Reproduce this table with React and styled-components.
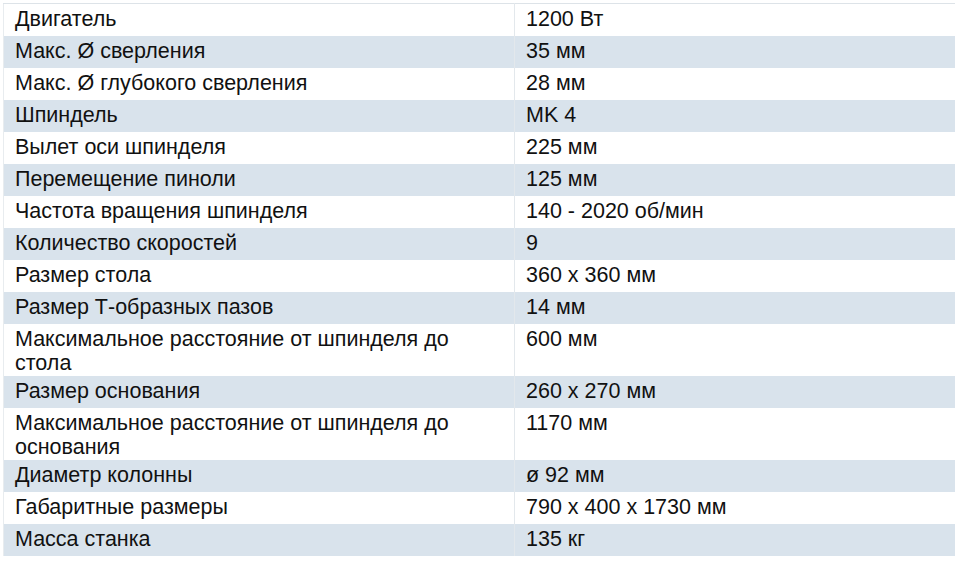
import React from 'react';
import styled, { createGlobalStyle } from 'styled-components';

const specs = [
    ['Двигатель', '1200 Вт'],
    ['Макс. Ø сверления', '35 мм'],
    ['Макс. Ø глубокого сверления', '28 мм'],
    ['Шпиндель', 'MK 4'],
    ['Вылет оси шпинделя', '225 мм'],
    ['Перемещение пиноли', '125 мм'],
    ['Частота вращения шпинделя', '140 - 2020 об/мин'],
    ['Количество скоростей', '9'],
    ['Размер стола', '360 x 360 мм'],
    ['Размер Т-образных пазов', '14 мм'],
    ['Максимальное расстояние от шпинделя до стола', '600 мм'],
    ['Размер основания', '260 x 270 мм'],
    ['Максимальное расстояние от шпинделя до основания', '1170 мм'],
    ['Диаметр колонны', 'ø 92 мм'],
    ['Габаритные размеры', '790 x 400 x 1730 мм'],
    ['Масса станка', '135 кг'],
];

const GlobalStyle = createGlobalStyle`
    body {
        margin: 0;
        background: #fff;
        font-family: "Liberation Sans", Arial, sans-serif;
    }
`;

const Page = styled.div`
    padding: 3px 4px 0 3px;
`;

const Table = styled.table`
    width: 952px;
    border-collapse: collapse;
    border-top: 1px solid #dde3e8;
    border-left: 1px solid #e8ecef;
    font-size: 21.5px;
    line-height: 24px;
    color: #111;
`;

const Row = styled.tr`
    background: ${props => (props.$shaded ? '#d9e3ec' : '#fff')};
`;

const Cell = styled.td`
    vertical-align: top;
    height: 28px;
    padding: 3px 11px 1px 11px;
    width: ${props => props.$width || 'auto'};
    border-right: ${props => (props.$divider ? '1px solid #e3e8ec' : 'none')};
`;

export default function App() {
    return (
        <>
            <GlobalStyle />
            <Page>
                <Table>
                    <tbody>
                        {specs.map(([name, value], i) => (
                            <Row key={name} $shaded={i % 2 === 1}>
                                <Cell $width="488px" $divider>{name}</Cell>
                                <Cell>{value}</Cell>
                            </Row>
                        ))}
                    </tbody>
                </Table>
            </Page>
        </>
    );
}
